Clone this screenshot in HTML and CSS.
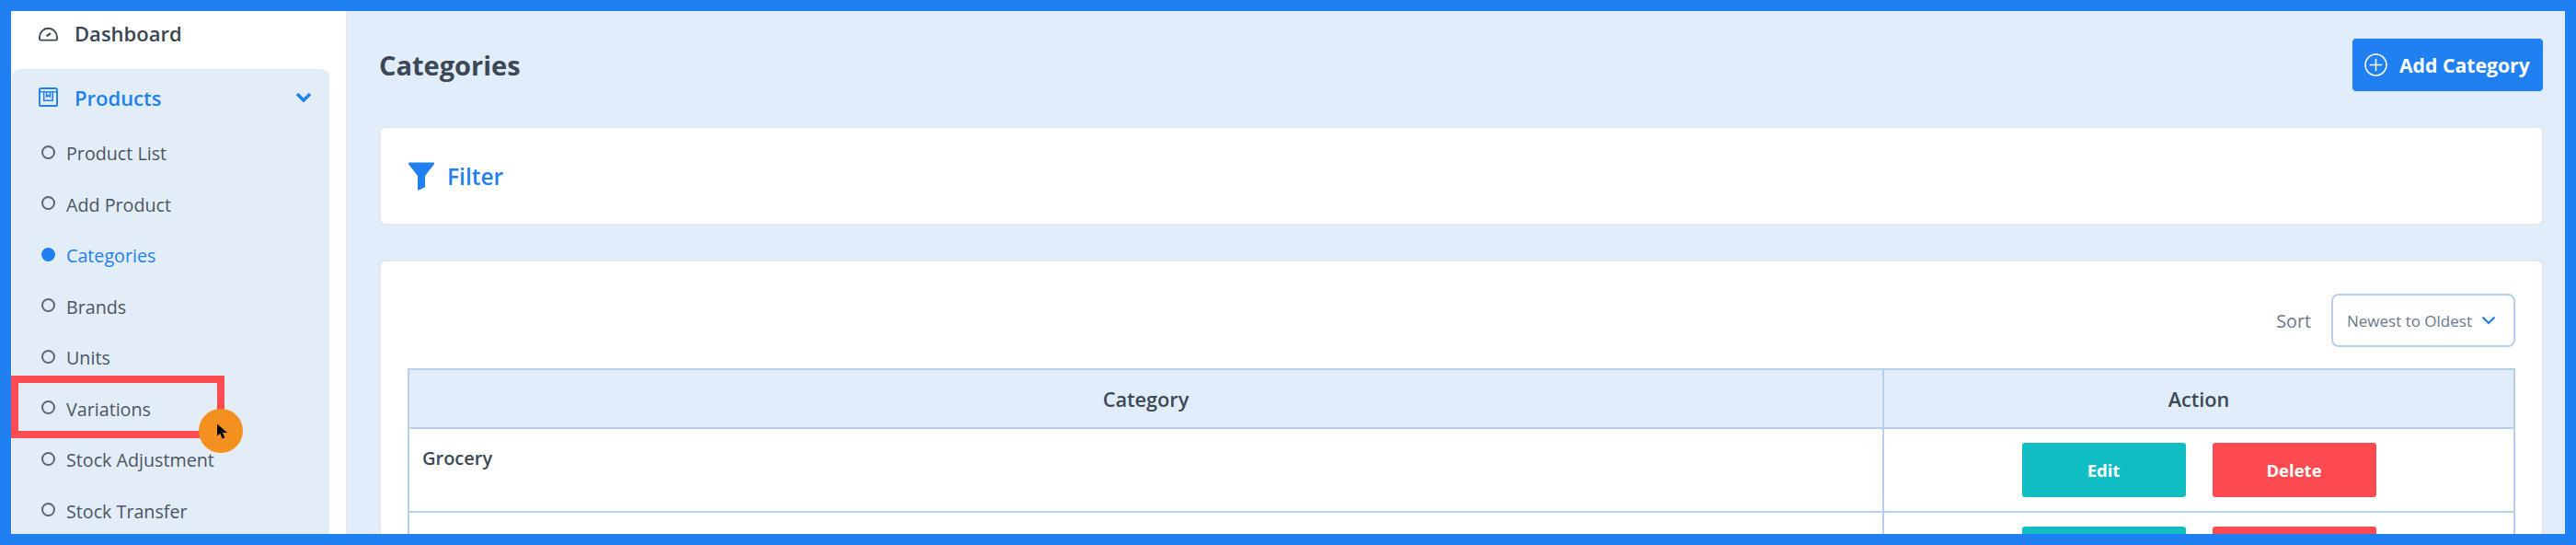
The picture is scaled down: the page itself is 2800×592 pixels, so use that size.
FILE: index.html
```html
<!DOCTYPE html>
<html lang="en">
<head>
<meta charset="utf-8">
<title>Categories</title>
<link rel="stylesheet" href="styles.css">
</head>
<body>
<div class="frame">
  <aside class="sidebar">
    <a class="top-link">
      <svg class="top-icon" viewBox="0 0 24 20" fill="none" stroke="#3f4a57" stroke-width="2"><path d="M2 14a10 10 0 1 1 20 0v2c0 1-.5 1.500-1.500 1.500h-17C2.500 17.500 2 17 2 16z"/><path d="M10 13l4.500-3.500" stroke-width="2.400"/></svg>
      <span>Dashboard</span>
    </a>
    <nav class="menu">
      <div class="menu-head">
        <svg class="box-icon" viewBox="0 0 22 22" fill="none" stroke="#2080f2" stroke-width="2"><rect x="1" y="1" width="20" height="20" rx="2"/><path d="M1 5h20" stroke-width="1.500"/><path d="M6 5v10h10V5M9 5v5.500l2-1.500 2 1.500V5" stroke-width="1.600"/></svg>
        <span class="menu-title">Products</span>
        <svg class="chev" viewBox="0 0 18 12" fill="none" stroke="#2080f2" stroke-width="3.600"><path d="M2 2l7 7 7-7"/></svg>
      </div>
      <ul class="sub">
        <li class="sub-item"><i class="dot"></i>Product List</li>
        <li class="sub-item"><i class="dot"></i>Add Product</li>
        <li class="sub-item active"><i class="dot"></i>Categories</li>
        <li class="sub-item"><i class="dot"></i>Brands</li>
        <li class="sub-item"><i class="dot"></i>Units</li>
        <li class="sub-item"><i class="dot"></i>Variations</li>
        <li class="sub-item"><i class="dot"></i>Stock Adjustment</li>
        <li class="sub-item"><i class="dot"></i>Stock Transfer</li>
      </ul>
    </nav>
  </aside>
  <main class="main">
    <header class="page-head">
      <h1 class="page-title">Categories</h1>
      <button class="add-btn">
        <svg class="plus" viewBox="0 0 24 24" fill="none" stroke="#fff" stroke-width="1.500"><circle cx="12" cy="12" r="11"/><path d="M12 5.500v13M5.500 12h13"/></svg>
        Add Category
      </button>
    </header>
    <section class="card filter-card">
      <svg class="funnel" viewBox="0 0 30 31" fill="#2080f2"><path d="M1 1.500C1 .8 1.500 .5 2 .5h26c.6 0 1 .4 1 1l-.2 1L19 15v11.500c0 .7-.2 1-.8 1.300l-6 2.700c-.7 0-1.200-.3-1.200-1V15L1.200 2.500z"/></svg>
      <span class="filter-label">Filter</span>
    </section>
    <section class="card list-card">
      <div class="sort-row">
        <span class="sort-label">Sort</span>
        <div class="select">
          <span>Newest to Oldest</span>
          <svg class="select-chev" viewBox="0 0 16 10" fill="none" stroke="#2080f2" stroke-width="2.200"><path d="M1.500 1.500L8 8l6.500-6.500"/></svg>
        </div>
      </div>
      <table class="table">
        <thead>
          <tr><th class="col-cat">Category</th><th>Action</th></tr>
        </thead>
        <tbody>
          <tr>
            <td class="cat">Grocery</td>
            <td class="act"><div class="actions"><button class="btn edit">Edit</button><button class="btn del">Delete</button></div></td>
          </tr>
          <tr>
            <td class="cat"></td>
            <td class="act"><div class="actions"><button class="btn edit" aria-label="Edit"></button><button class="btn del" aria-label="Delete"></button></div></td>
          </tr>
        </tbody>
      </table>
    </section>
  </main>
  <div class="highlight"></div>
  <div class="pointer">
    <svg class="cursor" viewBox="0 0 14 17"><path d="M0 0v14l3.500-3 2.500 6 3-1.300-2.500-5.700H12z" fill="#000"/></svg>
  </div>
</div>
</body>
</html>
```
FILE: styles.css
```css
* { box-sizing: border-box; }
html, body { margin: 0; height: 100%; }
body { font-family: "Open Sans", "Liberation Sans", sans-serif; overflow: hidden; background: #fff; }
.frame {
  position: relative;
  display: flex;
  width: 2800px;
  height: 592px;
  border: 12px solid #2080f2;
  overflow: hidden;
  background: #e1edfb;
}
.sidebar {
  flex: 0 0 364px;
  background: #fff;
  padding: 0 18px 0 1px;
}
.top-link {
  display: flex;
  align-items: center;
  height: 63px;
  padding: 0 0 15px 28px;
  font-size: 22px;
  font-weight: 600;
  color: #3a4552;
}
.top-icon { width: 23px; height: 19px; margin-right: 17px; }
.menu {
  background: #e3edf8;
  border-radius: 9px;
  height: 600px;
}
.menu-head {
  display: flex;
  align-items: center;
  height: 61px;
  margin-bottom: 3px;
  padding: 0 19px 0 29px;
  color: #2080f2;
}
.box-icon { width: 21px; height: 21px; margin-right: 18px; }
.menu-title { flex: 1; font-size: 22px; font-weight: 600; }
.chev { width: 18px; height: 12px; }
.sub { list-style: none; margin: 0; padding: 0; }
.sub-item {
  display: flex;
  align-items: center;
  height: 55.500px;
  padding-left: 32px;
  font-size: 19.700px;
  color: #4b5563;
}
.dot {
  width: 15px;
  height: 15px;
  border: 2px solid #5b6675;
  border-radius: 50%;
  margin-right: 12px;
  margin-top: -3px;
}
.active { color: #2080f2; }
.active .dot { background: #2080f2; border-color: #2080f2; }
.main {
  flex: 1;
  min-width: 0;
  padding: 29px 23px 0 34px;
  border-left: 2px solid #e6e9ee;
}
.page-head {
  display: flex;
  align-items: center;
  justify-content: space-between;
  height: 59px;
  margin-bottom: 37px;
}
.page-title { margin: 0; font-size: 29px; font-weight: 700; color: #3d4855; }
.add-btn {
  display: flex;
  align-items: center;
  width: 209px;
  height: 59px;
  padding: 0 0 0 13px;
  border: 1px solid #d4e4f8;
  border-radius: 5px;
  background: #2080f2;
  color: #fff;
  font: 700 21.200px "Open Sans", sans-serif;
}
.plus { width: 25px; height: 25px; margin-right: 13px; }
.card {
  background: #fff;
  border: 2px solid #e4e7ec;
  border-radius: 7px;
}
.filter-card {
  display: flex;
  align-items: center;
  height: 108px;
  margin-bottom: 37px;
  padding: 0 0 0 29px;
}
.funnel { width: 30px; height: 31px; margin-right: 13px; }
.filter-label { font-size: 24.500px; font-weight: 600; color: #2080f2; }
.list-card { height: 400px; padding: 0 29px; }
.sort-row {
  display: flex;
  align-items: center;
  justify-content: flex-end;
  height: 116px;
  padding-top: 12px;
}
.sort-label { font-size: 19.700px; color: #6b7889; margin-right: 22px; }
.select {
  display: flex;
  align-items: center;
  width: 200px;
  height: 58px;
  padding: 0 19px 0 15px;
  justify-content: space-between;
  border: 2px solid #b6cfea;
  border-radius: 8px;
  font-size: 17px;
  color: #6b7889;
}
.select-chev { width: 16px; height: 10px; }
.table {
  width: 2291px;
  border-collapse: collapse;
  table-layout: fixed;
  color: #3d4855;
}
.table th, .table td { border: 2px solid #b6cfea; }
.table th {
  height: 64px;
  background: #e1edfb;
  font-size: 21.700px;
  font-weight: 600;
}
.col-cat { width: 1603px; }
.table td { height: 90px; vertical-align: top; }
.table .cat { padding: 18px 14px; font-size: 20px; font-weight: 600; }
.table .act { padding: 15px 14px; }
.actions { display: flex; justify-content: center; gap: 29px; }
.btn {
  width: 178px;
  height: 59px;
  border: 0;
  border-radius: 3px;
  color: #fff;
  font: 700 18.500px "Open Sans", sans-serif;
}
.edit { background: #10bdc3; }
.del { background: #fe4a51; }
.highlight {
  position: absolute;
  left: 0;
  top: 396px;
  width: 232px;
  height: 68px;
  border: 8px solid #fe4a51;
}
.pointer {
  position: absolute;
  left: 204px;
  top: 432px;
  width: 48px;
  height: 48px;
  border-radius: 50%;
  background: #f39020;
}
.cursor { position: absolute; left: 20px; top: 16px; width: 13px; height: 17px; }
```
